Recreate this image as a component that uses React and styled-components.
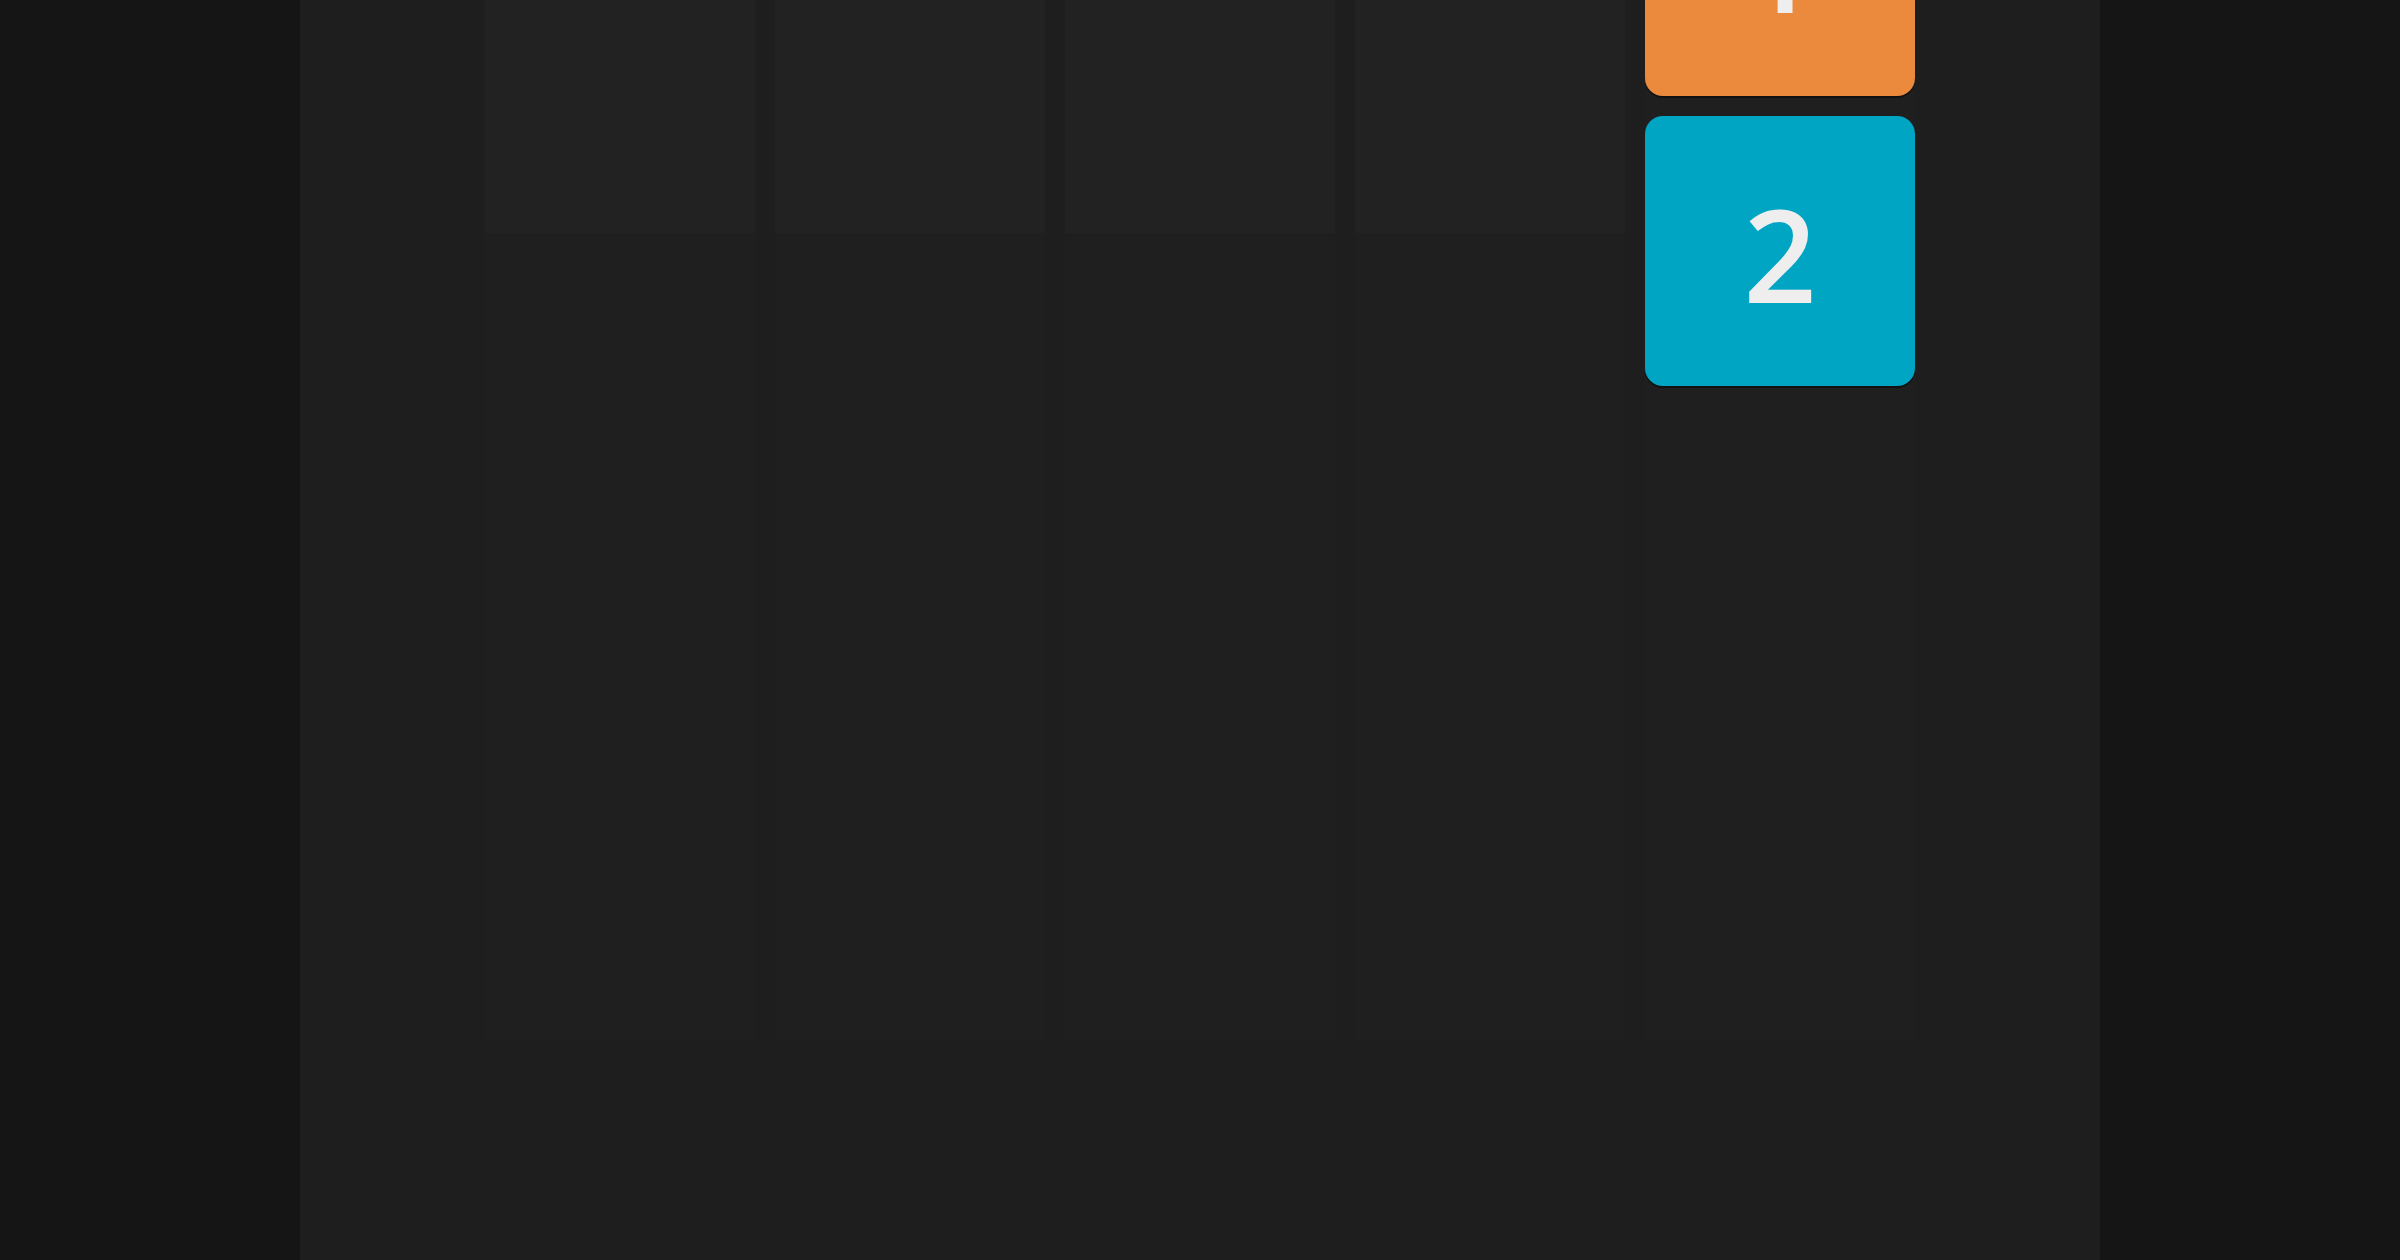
import React from "react";
import styled, { createGlobalStyle } from "styled-components";

const GlobalStyle = createGlobalStyle`
  html, body {
    margin: 0;
    padding: 0;
    background: #151515;
  }
  body {
    font-family: "Open Sans", "Liberation Sans", sans-serif;
  }
`;

const Page = styled.div`
  height: 1260px;
  overflow: hidden;
  background: #151515;
  display: flex;
  justify-content: center;
`;

const Stage = styled.main`
  width: 1800px;
  height: 100%;
  background: #1e1e1e;
  display: flex;
  justify-content: center;
`;

const Board = styled.div`
  display: grid;
  grid-template-columns: repeat(5, 270px);
  column-gap: 20px;
  height: 1040px;
`;

const Column = styled.div`
  display: flex;
  flex-direction: column;
  background: #1f1f1f;
  min-height: 0;
`;

const Slot = styled.div`
  height: 233px;
  flex-shrink: 0;
  background: #222222;
`;

const Reel = styled.div`
  display: flex;
  flex-direction: column;
  gap: 20px;
  margin-top: -174px;
`;

const Tile = styled.div`
  height: 270px;
  flex-shrink: 0;
  border-radius: 18px;
  background: ${(p) => p.$color};
  box-shadow: 0 2px 0 rgba(0, 0, 0, 0.45);
  display: flex;
  align-items: center;
  justify-content: center;
  color: #eeeeee;
  font-family: "Open Sans", "Liberation Sans", sans-serif;
  font-size: 128px;
  font-weight: 600;
  line-height: 1;
  padding-top: 6px;
  box-sizing: border-box;
`;

const reels = [
  { id: 1, tiles: [] },
  { id: 2, tiles: [] },
  { id: 3, tiles: [] },
  { id: 4, tiles: [] },
  {
    id: 5,
    tiles: [
      { value: 1, color: "#eb8a3c" },
      { value: 2, color: "#00a5c3" },
    ],
  },
];

export default function App() {
  return (
    <>
      <GlobalStyle />
      <Page>
        <Stage>
          <Board>
            {reels.map((r) => (
              <Column key={r.id}>
                {r.tiles.length === 0 ? (
                  <Slot />
                ) : (
                  <Reel>
                    {r.tiles.map((t) => (
                      <Tile key={t.value} $color={t.color}>
                        {t.value}
                      </Tile>
                    ))}
                  </Reel>
                )}
              </Column>
            ))}
          </Board>
        </Stage>
      </Page>
    </>
  );
}
